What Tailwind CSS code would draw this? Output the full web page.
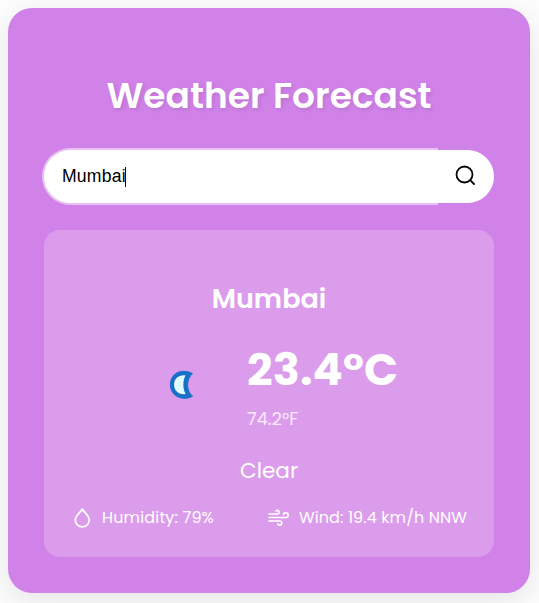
<!DOCTYPE html>
<html lang="en">
<head>
<meta charset="utf-8">
<title>Weather Forecast</title>
<script src="https://cdn.jsdelivr.net/npm/@tailwindcss/browser@4"></script>
</head>
<body class="h-[603px] overflow-hidden bg-[#fdfdfd] p-2 font-[Poppins,Inter,sans-serif] text-white">
<main class="h-[585px] w-[522px] rounded-[24px] bg-[#d182e9] px-9 pt-[60px] shadow-[0_8px_32px_rgba(0,0,0,0.1)]">
  <h1 class="h-[55px] text-center text-[36px] leading-[56px] font-semibold whitespace-nowrap [text-shadow:2px_2px_4px_rgba(0,0,0,0.1)]">Weather Forecast</h1>
  <form class="mt-[27px] flex h-[53px]">
    <div class="flex w-[392px] items-center rounded-l-full bg-white pl-[18px] font-['Liberation_Sans',sans-serif] text-[17.6px] text-black shadow-[0_0_0_2px_rgba(255,255,255,0.5)]">
      <span class="tracking-[0.2px]">Mumbai</span><span class="-ml-px h-5 w-px bg-black"></span>
    </div>
    <div class="flex w-[58px] items-center justify-center rounded-r-full bg-white">
      <svg class="-mt-[3px] size-6" viewBox="0 0 24 24" fill="none" stroke="#000" stroke-width="1.800" stroke-linecap="round" stroke-linejoin="round"><circle cx="11.500" cy="11.500" r="8"/><path d="m21 21-3.800-3.800"/></svg>
    </div>
  </form>
  <section class="mt-[27px] h-[327px] rounded-[16px] bg-[#db9cec] pt-[49px]">
    <h2 class="h-[40px] text-center text-[27px] leading-[40px] font-semibold">Mumbai</h2>
    <div class="flex h-[102px] pt-[21px]">
      <svg class="mt-[30px] ml-[125px] h-[30px] w-[26px] shrink-0" viewBox="0 0 26 30"><path d="M23.500 3.600C18 .500 10.500 .400 5.900 4.300C-.1 9.500-.1 19.200 5.400 24.600C9.800 28.800 18 29.600 23.600 26.200C17 21.500 16.800 9 23.500 3.600Z" fill="#1a70c8" stroke="#1a70c8" stroke-width="1" stroke-linejoin="round"/><path d="M16.500 5.400C9.500 4.800 5.200 8.800 5.100 14.700C5.100 20.700 9.500 24.700 16.700 24.100C13.600 18.500 13.600 10.700 16.500 5.400Z" fill="#e0ffff"/></svg>
      <div class="ml-[52px] whitespace-nowrap">
        <div class="h-[62px] text-[44.800px] leading-[60px] font-bold tracking-[0.1px]">23.4°C</div>
        <div class="text-[17.600px] leading-[34px] tracking-[0.1px] text-white/80">74.2°F</div>
      </div>
    </div>
    <p class="mt-[33px] text-center text-[21.600px] leading-[34px]">Clear</p>
    <div class="mt-[18px] flex h-6 items-center text-[16px] whitespace-nowrap">
      <svg class="ml-[28px] size-5 shrink-0" viewBox="0 0 20 20" fill="none" stroke="#fff" stroke-width="1.700" stroke-linejoin="round"><path d="M10.300 1C9.800 3.500 3.300 7 3.300 12a7 6.800 0 0 0 14 0C17.300 7 10.800 3.500 10.300 1Z"/></svg>
      <span class="ml-[10px] w-[165px] tracking-[0.150px]">Humidity: 79%</span>
      <svg class="size-6 shrink-0" viewBox="0 0 24 24" fill="none" stroke="#fff" stroke-width="1.700" stroke-linecap="round" stroke-linejoin="round"><path d="M2 8h8.500a1.800 1.800 0 1 0-1.500-3M2 11.500h17a2.400 2.400 0 1 0-2.500-3.200M2 15h10.800a2.100 2.100 0 1 1-2 3"/></svg>
      <span class="ml-2 tracking-[0.1px]">Wind: 19.4 km/h NNW</span>
    </div>
  </section>
</main>
</body>
</html>
